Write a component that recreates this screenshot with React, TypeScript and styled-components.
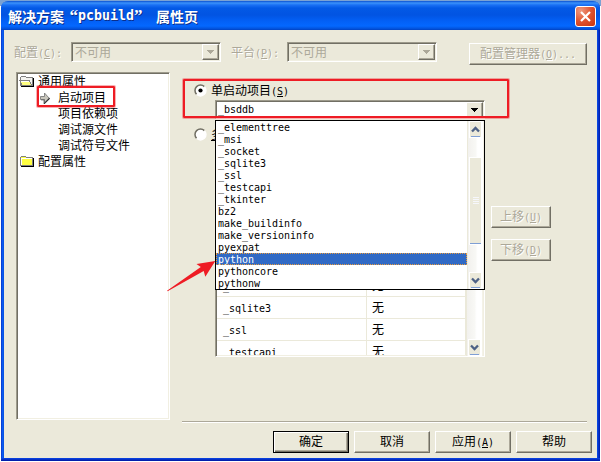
import React from 'react';
import styled, { createGlobalStyle, css } from 'styled-components';

const FACE = '#ebe9da';

const Global = createGlobalStyle`
  * { box-sizing: border-box; }
  html, body { margin: 0; padding: 0; overflow: hidden; background: #fff; }
  body { font: 12px/16px "Noto Sans CJK SC", sans-serif; color: #000; }
`;

const Stage = styled.div`
  position: relative;
  width: 601px;
  height: 462px;
  padding: 1px;
  background: linear-gradient(#7ba2d3 0 6px, #fff 6px);
`;

const Window = styled.div`
  width: 599px;
  height: 460px;
  padding: 0 3px 3px;
  display: flex;
  flex-direction: column;
  border-radius: 7px 7px 0 0;
  background:
    linear-gradient(#0a48e8, #0016a0) bottom / 100% 3px no-repeat,
    linear-gradient(90deg, #0831c8, #0a5bf0 50%, #0a50e0) left / 3px 100% no-repeat,
    linear-gradient(90deg, #0a4cea, #0019a8) right / 3px 100% no-repeat;
  overflow: hidden;
`;

const TitleBar = styled.header`
  height: 29px;
  flex: none;
  margin: 0 -3px;
  padding: 0 4px 0 7px;
  display: flex;
  align-items: center;
  justify-content: space-between;
  background: linear-gradient(#0a50d0 0, #3a92fb 2px, #1a70f4 4px, #0359e6 7px, #0254e2 14px, #0360f6 20px, #0468ff 25px, #0250d8 28px, #0140c0 29px);
`;

const Title = styled.h1`
  display: flex;
  margin: 1px 0 0;
  font-size: 14px;
  line-height: 18px;
  font-weight: 700;
  color: #fff;
  white-space: pre;
  text-shadow: 1px 1px 0 #0a2f8c;
`;

const TitleLatin = styled.span`
  font: 700 13.29px/18px "DejaVu Sans Mono", monospace;
`;

const TitleQuote = styled.span<{ $open?: boolean }>`
  width: 14px;
  font-family: "Liberation Serif", serif;
  font-size: 17px;
  text-align: ${p => (p.$open ? 'right' : 'left')};
`;

const CloseButton = styled.button`
  width: 21px;
  height: 21px;
  margin-top: 2px;
  padding: 0;
  display: grid;
  place-items: center;
  border: 1px solid #fff;
  border-radius: 3px;
  background: radial-gradient(circle at 25% 20%, #ee9a80, #e0532f 50%, #c8330c);
`;

const Body = styled.main`
  flex: 1;
  display: flex;
  flex-direction: column;
  background: ${FACE};
`;

const Latin = styled.span`
  font: 10px/12px "DejaVu Sans Mono", monospace;
  letter-spacing: -0.02px;
  white-space: pre;
`;

const disabledText = css`
  color: #aca899;
  text-shadow: 1px 1px 0 #fff;
`;

const ConfigRow = styled.div`
  display: flex;
  height: 36px;
  padding: 12px 0 0 10px;
  align-items: flex-start;
`;

const FieldLabel = styled.label<{ $width: number }>`
  width: ${p => p.$width}px;
  margin-top: 2px;
  ${disabledText}
`;

const PlatformLabel = styled(FieldLabel)`
  margin-left: 10px;
`;

const ManagerSlot = styled.div`
  margin: 1px 0 0 32px;
`;

const sunken = css`
  border: 1px solid;
  border-color: #9d9a8b #fff #fff #9d9a8b;
  box-shadow: inset 1px 1px 0 #716f64, inset -1px -1px 0 #f1efe2;
`;

const raised = css`
  border: 1px solid;
  border-color: #fff #716f64 #716f64 #fff;
  box-shadow: inset -1px -1px 0 #aca899;
`;

const Select = styled.div<{ $disabled?: boolean }>`
  ${sunken}
  width: ${p => (p.$disabled ? 150 : 270)}px;
  height: ${p => (p.$disabled ? 20 : 19)}px;
  padding: 1px 1px 1px ${p => (p.$disabled ? 3 : 2)}px;
  display: flex;
  justify-content: space-between;
  background: ${p => (p.$disabled ? FACE : '#fff')};
  line-height: 15px;
  ${p => p.$disabled && 'color: #aca899;'}
  & > ${Latin} { margin-top: 2px; }
`;

const SelectArrow = styled.span`
  ${raised}
  width: 17px;
  height: 16px;
  display: grid;
  place-items: center;
  background: ${FACE};
`;

const Button = styled.button<{ $width: number; $default?: boolean }>`
  ${raised}
  width: ${p => p.$width}px;
  height: 22px;
  padding: 0 0 2px;
  font: inherit;
  color: #000;
  background: ${FACE};
  &:disabled { ${disabledText} }
  ${p => p.$default && 'border-color: #000; box-shadow: inset 1px 1px 0 #fff, inset -1px -1px 0 #716f64, inset -2px -2px 0 #aca899;'}
`;

const Columns = styled.div`
  display: flex;
  height: 356px;
  padding: 6px 7px 0 12px;
  gap: 12px;
`;

const Tree = styled.div`
  ${sunken}
  width: 154px;
  height: 348px;
  padding: 0 2px;
  background: #fff;
`;

const TreeRow = styled.div<{ $child?: boolean }>`
  height: 16px;
  display: flex;
  align-items: flex-start;
  padding-left: ${p => (p.$child ? 21 : 0)}px;
  line-height: 15px;
  svg { flex: none; display: block; }
`;

const TreeIcon = styled.span<{ $wide?: boolean }>`
  width: ${p => (p.$wide ? 19 : 18)}px;
  height: 16px;
  padding-top: ${p => (p.$wide ? 0 : 3)}px;
`;

const Panel = styled.section`
  width: 405px;
  height: 351px;
  border-bottom: 1px solid #fff;
  box-shadow: inset 0 -1px 0 #aca899;
`;

const RadioRow = styled.label<{ $second?: boolean }>`
  display: flex;
  align-items: center;
  gap: 4px;
  height: 16px;
  margin: ${p => (p.$second ? '7px 0 0 12px' : '10px 0 2px 12px')};
`;

const SelectSlot = styled.div`
  margin-left: 33px;
`;

const Projects = styled.div`
  display: flex;
  gap: 6px;
  margin: 9px 0 0 33px;
`;

const TableFrame = styled.div`
  ${sunken}
  width: 270px;
  height: 206px;
  display: flex;
  overflow: hidden;
  background: #fff;
`;

const Table = styled.div`
  width: 250px;
  height: 203px;
  padding: 13px 0 0 1px;
  overflow: hidden;
  border-right: 1px solid ${FACE};
`;

const TableRow = styled.div`
  display: grid;
  grid-template-columns: 149px 1fr;
  height: 22px;
  border-bottom: 1px solid ${FACE};
`;

const Cell = styled.span`
  padding: 2px 0 0 6px;
  & + & { padding-left: 5px; border-left: 1px solid ${FACE}; }
`;

const MoveButtons = styled.div`
  display: flex;
  flex-direction: column;
  gap: 11px;
  margin-top: 55px;
`;

const Footer = styled.footer`
  display: flex;
  justify-content: flex-end;
  gap: 5px;
  padding: 9px 5px 0;
`;

const DropList = styled.div`
  position: absolute;
  left: 215px;
  top: 120px;
  width: 270px;
  height: 170px;
  display: flex;
  border: 1px solid #000;
  background: #fff;
`;

const Options = styled.div`
  width: 251px;
`;

const Option = styled.div<{ $selected?: boolean }>`
  height: 12px;
  padding: 1px 0 0 2px;
  display: flex;
  ${p => p.$selected && 'background: #316ac5; color: #fff; outline: 1px dotted #e89a3c; outline-offset: -1px;'}
  & > ${Latin} { line-height: 11px; }
`;

const ScrollBar = styled.div`
  width: 17px;
  display: flex;
  flex-direction: column;
  justify-content: flex-end;
  padding: 0 1px;
  border-left: 1px solid ${FACE};
  border-right: 1px solid #f4f2e8;
  background: linear-gradient(90deg, #f2f1ee, #f8f8f5 50%, #fff 65%);
`;

const ScrollArrow = styled.span`
  height: 17px;
  flex: none;
  display: grid;
  place-items: center;
  border: 1px solid #fff;
  background: linear-gradient(#7f9fd4, #7f9fd4) 50% 100% / 9px 1px no-repeat, ${FACE};
`;

const ScrollThumb = styled.span`
  height: 88px;
  margin-top: 19px;
  margin-bottom: auto;
  display: grid;
  place-items: center;
  border: 1px solid #fff;
  background: linear-gradient(#7f9fd4, #7f9fd4) 50% 100% / 11px 1px no-repeat, ${FACE};
`;

const Grip = styled.span`
  width: 6px;
  height: 8px;
  background: repeating-linear-gradient(#f6f7fb 0 1px, ${FACE} 1px 2px);
`;

const Highlight = styled.div<{ $x: number; $y: number; $w: number; $h: number }>`
  position: absolute;
  left: ${p => p.$x}px;
  top: ${p => p.$y}px;
  width: ${p => p.$w}px;
  height: ${p => p.$h}px;
  border: 2px solid #ee1c24;
  border-radius: 1px;
  box-shadow: 0 0 0 1px rgba(238, 28, 36, 0.35);
`;

const Pointer = styled.svg`
  position: absolute;
  left: 165px;
  top: 258px;
`;

const Key = ({ k, tail = '' }: { k: string; tail?: string }) => (
  <Latin>(<u>{k}</u>){tail}</Latin>
);

const Down = ({ color = '#000' }: { color?: string }) => (
  <svg width="7" height="4" shapeRendering="crispEdges">
    <path d="M0 0h7v1h-1v1h-1v1h-1v1h-1v-1h-1v-1h-1v-1h-1z" fill={color} />
  </svg>
);

const Chevron = ({ up }: { up?: boolean }) => (
  <svg width="9" height="7" viewBox="0 0 9 7">
    <path d={up ? 'M1 5.5l3.5-3.5L8 5.5' : 'M1 1.5L4.5 5 8 1.5'} fill="none" stroke="#4d6185" strokeWidth="2.3" />
  </svg>
);

const Radio = ({ checked }: { checked?: boolean }) => (
  <svg width="13" height="13" viewBox="0 0 13 13">
    <circle cx="6.5" cy="6.5" r="5.3" fill="#fff" />
    <path d="M2.6 10.4A5.5 5.5 0 0 1 10.4 2.6" fill="none" stroke="#716f64" strokeWidth="1.5" />
    <path d="M2.6 10.4A5.5 5.5 0 0 0 10.4 2.6" fill="none" stroke="#fff" strokeWidth="1.3" />
    {checked && <circle cx="6.5" cy="6.5" r="2.1" />}
  </svg>
);

const Folder = ({ open }: { open?: boolean }) => (
  <svg width="16" height="16" viewBox="0 0 16 16" shapeRendering="crispEdges">
    <path d="M2 14h13V5h-1v8H2z" fill="#000" />
    <path d="M1.5 12.5v-8l1-1h4l1 1h6v8z" fill={open ? '#f4f4f0' : '#ffff40'} stroke="#808080" />
    {open ? (
      <>
        <path d="M3.5 12.5l-3-5h10l2 5z" fill="#ffff80" stroke="#808080" />
        <path d="M2 8.5h8" stroke="#fff" />
      </>
    ) : (
      <path d="M2 5.5h11M2.5 5v7" stroke="#fff" />
    )}
  </svg>
);

const CurrentArrow = () => (
  <svg width="10" height="12" viewBox="0 0 10 12">
    <path d="M1 7.5h3.5V11L9.5 6" fill="none" stroke="#303030" strokeWidth="1.6" />
    <path d="M.5 4.5h4v-3.5l4.5 5-4.500 4.500v-3h-4z" fill="#c8c6bc" stroke="#707070" strokeWidth=".8" />
  </svg>
);

const options = [
  '_elementtree', '_msi', '_socket', '_sqlite3', '_ssl', '_testcapi', '_tkinter',
  'bz2', 'make_buildinfo', 'make_versioninfo', 'pyexpat', 'python', 'pythoncore', 'pythonw',
];

const rows = ['_bsddb', '_ctypes', '_ctypes_test', '_elementtree', '_msi', '_socket', '_sqlite3', '_ssl', '_testcapi'];

export default function App() {
  return (
    <>
      <Global />
      <Stage>
        <Window>
          <TitleBar>
            <Title>
              解决方案<TitleQuote $open>“</TitleQuote>
              <TitleLatin>pcbuild</TitleLatin>
              <TitleQuote>”</TitleQuote>
              <TitleLatin> </TitleLatin>属性页
            </Title>
            <CloseButton>
              <svg width="13" height="13" viewBox="0 0 13 13">
                <path d="M2 2l9 9M11 2l-9 9" stroke="#fff" strokeWidth="2.2" />
              </svg>
            </CloseButton>
          </TitleBar>
          <Body>
            <ConfigRow>
              <FieldLabel $width={57}>配置<Key k="C" tail=":" /></FieldLabel>
              <Select $disabled>不可用<SelectArrow><Down color="#aca899" /></SelectArrow></Select>
              <PlatformLabel $width={56}>平台<Key k="P" tail=":" /></PlatformLabel>
              <Select $disabled>不可用<SelectArrow><Down color="#aca899" /></SelectArrow></Select>
              <ManagerSlot>
                <Button $width={118} disabled>配置管理器<Key k="O" tail="..." /></Button>
              </ManagerSlot>
            </ConfigRow>
            <Columns>
              <Tree>
                <TreeRow><TreeIcon $wide><Folder open /></TreeIcon>通用属性</TreeRow>
                <TreeRow $child><TreeIcon><CurrentArrow /></TreeIcon>启动项目</TreeRow>
                <TreeRow $child><TreeIcon />项目依赖项</TreeRow>
                <TreeRow $child><TreeIcon />调试源文件</TreeRow>
                <TreeRow $child><TreeIcon />调试符号文件</TreeRow>
                <TreeRow><TreeIcon $wide><Folder /></TreeIcon>配置属性</TreeRow>
              </Tree>
              <Panel>
                <RadioRow><Radio checked /><span>单启动项目<Key k="S" /></span></RadioRow>
                <SelectSlot>
                  <Select><Latin>_bsddb</Latin><SelectArrow><Down /></SelectArrow></Select>
                </SelectSlot>
                <RadioRow $second><Radio /><u>多</u></RadioRow>
                <Projects>
                  <TableFrame>
                    <Table>
                      {rows.map(name => (
                        <TableRow key={name}><Cell><Latin>{name}</Latin></Cell><Cell>无</Cell></TableRow>
                      ))}
                    </Table>
                    <ScrollBar><ScrollArrow><Chevron /></ScrollArrow></ScrollBar>
                  </TableFrame>
                  <MoveButtons>
                    <Button $width={60} disabled>上移<Key k="U" /></Button>
                    <Button $width={60} disabled>下移<Key k="D" /></Button>
                  </MoveButtons>
                </Projects>
              </Panel>
            </Columns>
            <Footer>
              <Button $width={76} $default>确定</Button>
              <Button $width={76}>取消</Button>
              <Button $width={76}>应用<Key k="A" /></Button>
              <Button $width={76}>帮助</Button>
            </Footer>
          </Body>
        </Window>
        <DropList>
          <Options>
            {options.map(name => (
              <Option key={name} $selected={name === 'python'}><Latin>{name}</Latin></Option>
            ))}
          </Options>
          <ScrollBar>
            <ScrollArrow><Chevron up /></ScrollArrow>
            <ScrollThumb><Grip /></ScrollThumb>
            <ScrollArrow><Chevron /></ScrollArrow>
          </ScrollBar>
        </DropList>
        <Highlight $x={37} $y={86} $w={78} $h={21} />
        <Highlight $x={183} $y={79} $w={326} $h={39} />
        <Pointer width="52" height="36" viewBox="165 258 52 36">
          <path d="M215.3 261L196.5 264l4.3 3L167 290.7l.6.6L203.7 271l1.6 5.7z" fill="#ee1c24" />
        </Pointer>
      </Stage>
    </>
  );
}
